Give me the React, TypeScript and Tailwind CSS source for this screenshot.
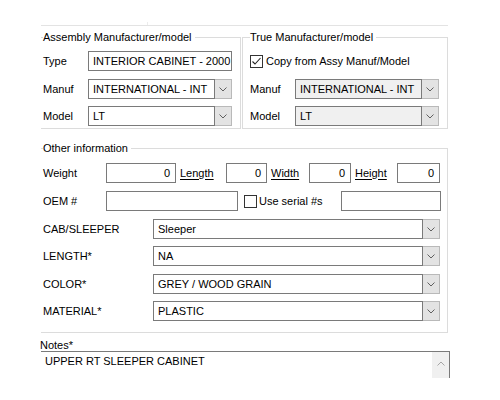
import React from "react";

const Chevron = ({ up = false, color = "#606060" }: { up?: boolean; color?: string }) => (
  <svg width="8" height="5" viewBox="0 0 8 5">
    <polyline
      points={up ? "0.5,4.5 4,1 7.5,4.5" : "0.5,0.5 4,4 7.5,0.5"}
      fill="none"
      stroke={color}
      strokeWidth="1"
    />
  </svg>
);

const TextBox = ({
  w,
  value = "",
  right = false,
}: {
  w: string;
  value?: string;
  right?: boolean;
}) => (
  <div
    className={`${w} h-[20px] shrink-0 border border-[#7a7a7a] bg-white flex items-center ${
      right ? "justify-end pr-[5px]" : "pl-[4px]"
    } whitespace-nowrap overflow-hidden`}
  >
    {value}
  </div>
);

const Combo = ({
  w,
  value,
  disabled = false,
}: {
  w: string;
  value: string;
  disabled?: boolean;
}) => (
  <div className={`${w} h-[20px] shrink-0 flex`}>
    <div
      className={`flex-1 min-w-0 h-full border border-[#7a7a7a] ${
        disabled ? "bg-[#f0f0f0]" : "bg-white"
      } flex items-center pl-[4px] whitespace-nowrap overflow-hidden`}
    >
      {value}
    </div>
    <div className="w-[17px] h-full shrink-0 border-y border-r border-[#b9b9b9] bg-[#e3e3e3] flex items-center justify-center">
      <Chevron />
    </div>
  </div>
);

const CheckBox = ({ checked = false }: { checked?: boolean }) => (
  <div className="w-[13px] h-[13px] shrink-0 border border-[#333333] bg-white flex items-center justify-center">
    {checked && (
      <svg width="11" height="11" viewBox="0 0 11 11">
        <polyline points="1.5,5.5 4,8 9.5,2" fill="none" stroke="#222222" strokeWidth="1.1" />
      </svg>
    )}
  </div>
);

const Legend = ({ children }: { children: React.ReactNode }) => (
  <legend className="h-[14px] leading-[14px] pr-[3px] pl-0 text-black">{children}</legend>
);

const ComboRow = ({ label, value, mt }: { label: string; value: string; mt: string }) => (
  <div className={`flex items-center h-[20px] ${mt}`}>
    <div className="w-[110px] shrink-0">{label}</div>
    <Combo w="w-[287px]" value={value} />
  </div>
);

export default function App() {
  return (
    <div className="w-[500px] h-[400px] bg-white overflow-hidden font-['Liberation_Sans',Arial,sans-serif] text-[11px] text-black">
      <div className="ml-[40px] w-[410px] h-[378px] overflow-hidden pt-[22px] pl-px">
        <div className="ml-[106px] w-px h-[3px] bg-[#ececec]" />
        <div className="w-[407px] h-px bg-[#e3e3e3]" />

        {/* Top groups */}
        <div className="flex mt-[4px]">
          <fieldset className="w-[200px] min-w-0 border-t border-r border-b border-[#dcdcdc] pl-[2px] pt-[7px] pb-[2px]">
            <Legend>Assembly Manufacturer/model</Legend>
            <div className="flex items-center h-[20px]">
              <div className="w-[45px] shrink-0">Type</div>
              <TextBox w="w-[144px]" value="INTERIOR CABINET - 2000" />
            </div>
            <div className="flex items-center h-[20px] mt-[8px]">
              <div className="w-[45px] shrink-0">Manuf</div>
              <Combo w="w-[144px]" value="INTERNATIONAL - INT" />
            </div>
            <div className="flex items-center h-[20px] mt-[7px]">
              <div className="w-[45px] shrink-0">Model</div>
              <Combo w="w-[144px]" value="LT" />
            </div>
          </fieldset>

          <fieldset className="ml-[1px] w-[206px] min-w-0 border border-[#dcdcdc] pl-[7px] pt-[7px] pb-[1px]">
            <Legend>True Manufacturer/model</Legend>
            <div className="flex items-center h-[20px]">
              <CheckBox checked />
              <div className="ml-[3px]">Copy from Assy Manuf/Model</div>
            </div>
            <div className="flex items-center h-[20px] mt-[8px]">
              <div className="w-[45px] shrink-0">Manuf</div>
              <Combo w="w-[144px]" value="INTERNATIONAL - INT" disabled />
            </div>
            <div className="flex items-center h-[20px] mt-[7px]">
              <div className="w-[45px] shrink-0">Model</div>
              <Combo w="w-[144px]" value="LT" disabled />
            </div>
          </fieldset>
        </div>

        {/* Other information */}
        <fieldset className="mt-[12px] w-[407px] min-w-0 border-t border-r border-b border-[#dcdcdc] pl-[2px] pt-[8px] pb-[11px]">
          <Legend>Other information</Legend>
          <div className="flex items-center h-[20px]">
            <div className="w-[63px] shrink-0">Weight</div>
            <TextBox w="w-[70px]" value="0" right />
            <div className="ml-[4px] w-[46px] shrink-0 underline underline-offset-[2px]">Length</div>
            <TextBox w="w-[41px]" value="0" right />
            <div className="ml-[4px] w-[38px] shrink-0 underline underline-offset-[2px]">Width</div>
            <TextBox w="w-[42px]" value="0" right />
            <div className="ml-[4px] w-[42px] shrink-0 underline underline-offset-[2px]">Height</div>
            <TextBox w="w-[43px]" value="0" right />
          </div>
          <div className="flex items-center h-[20px] mt-[8px]">
            <div className="w-[63px] shrink-0">OEM #</div>
            <TextBox w="w-[132px]" />
            <div className="ml-[6px]">
              <CheckBox />
            </div>
            <div className="ml-[2px] w-[82px] shrink-0">Use serial #s</div>
            <TextBox w="w-[100px]" />
          </div>
          <ComboRow label="CAB/SLEEPER" value="Sleeper" mt="mt-[8px]" />
          <ComboRow label="LENGTH*" value="NA" mt="mt-[7px]" />
          <ComboRow label="COLOR*" value="GREY / WOOD GRAIN" mt="mt-[8px]" />
          <ComboRow label="MATERIAL*" value="PLASTIC" mt="mt-[7px]" />
        </fieldset>

        {/* Notes */}
        <div className="mt-[5px] -ml-px h-[13px] leading-[14px]">Notes*</div>
        <div className="w-[409px] h-[60px] border-t border-r border-[#7a7a7a] bg-white flex">
          <div className="flex-1 pl-[4px] pt-[2px] leading-[14px]">UPPER RT SLEEPER CABINET</div>
          <div className="w-[17px] h-full bg-[#f0f0f0] flex justify-center pt-[9px]">
            <Chevron up color="#a6a6a6" />
          </div>
        </div>
      </div>
    </div>
  );
}
